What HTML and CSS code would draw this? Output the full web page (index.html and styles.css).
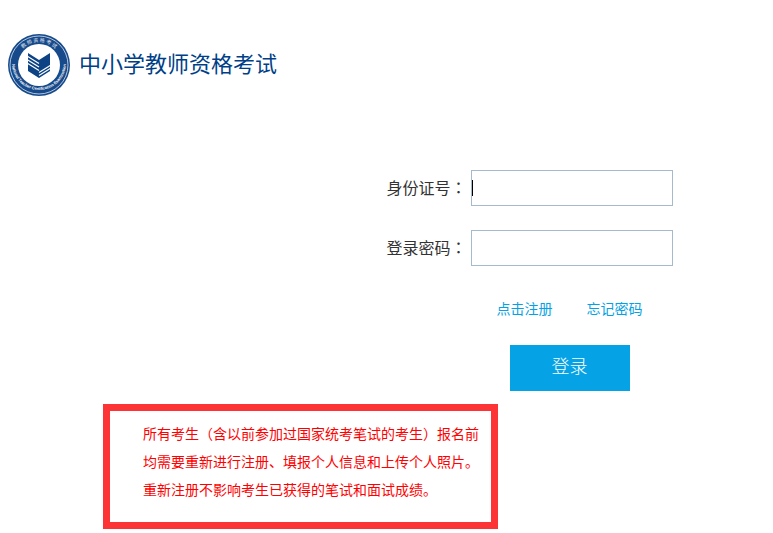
FILE: index.html
```html
<!DOCTYPE html>
<html lang="zh-CN">
<head>
  <meta charset="UTF-8">
  <meta name="viewport" content="width=device-width, initial-scale=1.0">
  <title>中小学教师资格考试</title>
  <link rel="stylesheet" href="styles.css">
</head>
<body>
  <div class="header">
    <svg class="logo" viewBox="0 0 62 62" aria-hidden="true">
      <defs>
        <path id="ringTop" d="M8 31a23 23 0 0 1 46 0" />
        <path id="ringBottom" d="M4 29a27 27 0 0 0 54 0" />
      </defs>
      <circle cx="31" cy="31" r="31" fill="#174a8b" />
      <circle cx="31" cy="31" r="29" fill="none" stroke="#dce6f1" stroke-width=".8" />
      <circle cx="31" cy="31" r="21" fill="#fff" />
      <text class="ring-cn"><textPath href="#ringTop" startOffset="50%" text-anchor="middle">教 师 资 格 考 试</textPath></text>
      <text class="ring-en"><textPath href="#ringBottom" startOffset="50%" text-anchor="middle">National Teacher Certification Examination</textPath></text>
      <path fill="#0d4385" d="M20 19l11 7 11-7v18l-11 7-11-7z" />
      <path fill="none" stroke="#fff" stroke-width="1.2" d="M19 22l12 7.500M19 25.500l12 7.500M19 29l12 7.500M43 31l-12 7.500M43 34l-12 7.500" />
    </svg>
    <h1>中小学教师资格考试</h1>
  </div>

  <form class="login-form">
    <label for="idCard">身份证号<span class="colon" lang="zh-TW">：</span></label>
    <div class="field">
      <input type="text" id="idCard" autofocus>
      <span class="caret"></span>
    </div>
    <label for="password">登录密码<span class="colon" lang="zh-TW">：</span></label>
    <div class="field">
      <input type="password" id="password">
    </div>
    <div class="actions">
      <div class="links">
        <a href="#">点击注册</a>
        <a href="#">忘记密码</a>
      </div>
      <button type="submit">登录</button>
    </div>
  </form>

  <div class="notice">
    <p>所有考生（含以前参加过国家统考笔试的考生）报名前均需要重新进行注册、填报个人信息和上传个人照片。</p>
    <p>重新注册不影响考生已获得的笔试和面试成绩。</p>
  </div>
</body>
</html>
```

FILE: styles.css
```css
* {
  box-sizing: border-box;
}
body {
  margin: 0;
  background: #fff;
  color: #333;
  font-family: "Noto Sans CJK SC", sans-serif;
}
.header {
  display: flex;
  align-items: center;
  gap: 9px;
  padding: 34px 8px 0;
}
.logo {
  width: 62px;
  height: 62px;
}
.ring-cn {
  fill: #e4ecf5;
  font-size: 5px;
}
.ring-en {
  fill: #fff;
  font-family: "Liberation Sans", sans-serif;
  font-size: 4px;
  font-weight: bold;
}
h1 {
  margin: 0;
  padding-bottom: 6px;
  color: #003f88;
  font-size: 22px;
  font-weight: 400;
  line-height: 32px;
}
.login-form {
  display: grid;
  grid-template-columns: 80px 202px;
  gap: 24px 4px;
  align-items: center;
  margin: 74px 0 0 50%;
}
label {
  padding-bottom: 2px;
  font-size: 16px;
  white-space: nowrap;
}
.colon {
  font-family: "Noto Sans CJK TC", sans-serif;
}
.field {
  position: relative;
  height: 36px;
}
input {
  display: block;
  width: 100%;
  height: 36px;
  padding: 0;
  border: 1px solid #a6bace;
  border-radius: 0;
  outline: none;
  font-size: 16px;
  caret-color: transparent;
}
.caret {
  position: absolute;
  top: 10px;
  left: 1px;
  width: 1px;
  height: 16px;
  background: #000;
}
.actions {
  grid-column: 2;
  display: flex;
  flex-direction: column;
  align-items: center;
  gap: 26px;
  padding: 7px 4px 0 0;
}
.links {
  display: flex;
  gap: 34px;
  font-size: 14px;
  line-height: 22px;
}
a {
  color: #05a1e4;
  text-decoration: none;
}
button {
  width: 120px;
  height: 46px;
  padding: 0 0 6px;
  border: none;
  background: #05a3e6;
  color: #fff;
  font-family: inherit;
  font-size: 18px;
  font-weight: 300;
  cursor: pointer;
}
.notice {
  max-width: 395px;
  margin: 13px 0 0 103px;
  padding: 8px 12px 19px 33px;
  border: 7px solid #fd3435;
  color: #f00;
  font-size: 14px;
  line-height: 28px;
}
.notice p {
  margin: 0;
}
```
